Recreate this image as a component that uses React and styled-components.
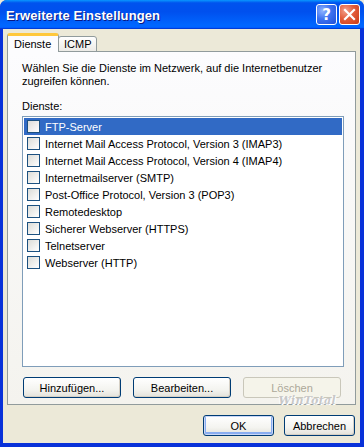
import styled, { createGlobalStyle } from "styled-components";

const GlobalStyle = createGlobalStyle`
  html, body {
    margin: 0;
    padding: 0;
    background: #ece9d8;
  }
  * {
    box-sizing: border-box;
  }
`;

const services = [
  "FTP-Server",
  "Internet Mail Access Protocol, Version 3 (IMAP3)",
  "Internet Mail Access Protocol, Version 4 (IMAP4)",
  "Internetmailserver (SMTP)",
  "Post-Office Protocol, Version 3 (POP3)",
  "Remotedesktop",
  "Sicherer Webserver (HTTPS)",
  "Telnetserver",
  "Webserver (HTTP)",
];

const App = () => {
  return (
    <>
      <GlobalStyle />
      <StyledWindow>
        <StyledTitleBar>
          <StyledTitle>Erweiterte Einstellungen</StyledTitle>
          <StyledCaptionButton>?</StyledCaptionButton>
          <StyledCaptionButton $close>
            <svg width="13" height="13" viewBox="0 0 13 13">
              <path
                d="M2 2 L11 11 M11 2 L2 11"
                stroke="#fff"
                strokeWidth="2.2"
                strokeLinecap="square"
              />
            </svg>
          </StyledCaptionButton>
        </StyledTitleBar>
        <StyledBody>
          <StyledTabs>
            <StyledTab $active>Dienste</StyledTab>
            <StyledTab>ICMP</StyledTab>
          </StyledTabs>
          <StyledPanel>
            <StyledText>
              Wählen Sie die Dienste im Netzwerk, auf die Internetbenutzer
              zugreifen können.
            </StyledText>
            <StyledLabel>Dienste:</StyledLabel>
            <StyledList>
              {services.map((name, i) => (
                <StyledRow key={name} $selected={i === 0}>
                  <StyledCheck />
                  <span>{name}</span>
                </StyledRow>
              ))}
            </StyledList>
            <StyledButtonRow>
              <StyledButton>Hinzufügen...</StyledButton>
              <StyledButton>Bearbeiten...</StyledButton>
              <StyledButton disabled>
                Löschen
                <StyledWatermark>WinTotal</StyledWatermark>
              </StyledButton>
            </StyledButtonRow>
          </StyledPanel>
          <StyledFooter>
            <StyledButton $default $small>
              OK
            </StyledButton>
            <StyledButton $small>Abbrechen</StyledButton>
          </StyledFooter>
        </StyledBody>
      </StyledWindow>
    </>
  );
};

const StyledWindow = styled.div`
  width: 364px;
  height: 447px;
  display: flex;
  flex-direction: column;
  background: #0831d9;
  border-radius: 7px 7px 0 0;
  overflow: hidden;
  font-family: "Liberation Sans", Arial, sans-serif;
  font-size: 11px;
  color: #000;
`;

const StyledTitleBar = styled.div`
  height: 29px;
  flex: none;
  display: flex;
  align-items: center;
  padding: 0 4px 0 6px;
  gap: 2px;
  background: linear-gradient(
    180deg,
    #0997ff 0%,
    #0053ee 10%,
    #0050ee 40%,
    #0066ff 86%,
    #0066ff 92%,
    #005bff 95%,
    #003dd7 97%,
    #003dd7 100%
  );
`;

const StyledTitle = styled.div`
  flex: 1;
  color: #fff;
  font-family: "Liberation Sans", Arial, sans-serif;
  font-weight: bold;
  font-size: 13px;
  letter-spacing: 0.1px;
  text-shadow: 1px 1px 0 #0a1883;
  padding-top: 1px;
`;

const StyledCaptionButton = styled.div`
  width: 21px;
  height: 21px;
  border: 1px solid #fff;
  border-radius: 3px;
  display: flex;
  align-items: center;
  justify-content: center;
  color: #fff;
  font-family: "DejaVu Sans", sans-serif;
  font-weight: bold;
  font-size: 15px;
  background: ${(p) =>
    p.$close
      ? "radial-gradient(circle at 30% 30%, #f2a18c 0%, #e35c3a 45%, #c93a16 100%)"
      : "radial-gradient(circle at 30% 30%, #8fb4ff 0%, #3d72f0 45%, #1f4fd8 100%)"};
`;

const StyledBody = styled.div`
  flex: 1;
  margin: 0 4px 4px 3px;
  background: #ece9d8;
  padding: 5px 4px 6px 4px;
  display: flex;
  flex-direction: column;
`;

const StyledTabs = styled.div`
  display: flex;
  align-items: flex-end;
  height: 18px;
  position: relative;
  z-index: 1;
  margin-bottom: -1px;
`;

const StyledTab = styled.div`
  height: ${(p) => (p.$active ? "19px" : "16px")};
  padding: 0 ${(p) => (p.$active ? "6px" : "5px")};
  display: flex;
  align-items: center;
  background: ${(p) =>
    p.$active ? "#fcfcfe" : "linear-gradient(180deg, #fff, #ecebe6)"};
  border: 1px solid #919b9c;
  border-bottom: ${(p) => (p.$active ? "none" : "1px solid #919b9c")};
  border-top: ${(p) => (p.$active ? "3px solid #ffc83c" : "1px solid #919b9c")};
  border-radius: 3px 3px 0 0;
  margin-left: ${(p) => (p.$active ? "0" : "-1px")};
  width: ${(p) => (p.$active ? "52px" : "39px")};
  font-size: 11px;
`;

const StyledPanel = styled.div`
  height: 354px;
  flex: none;
  border: 1px solid #919b9c;
  background: linear-gradient(180deg, #fcfcfe 0%, #f4f3ee 100%);
  padding: 10px 11px 0 14px;
  display: flex;
  flex-direction: column;
`;

const StyledText = styled.div`
  line-height: 13px;
`;

const StyledLabel = styled.div`
  margin-top: 12px;
  line-height: 13px;
`;

const StyledList = styled.div`
  margin-top: 3px;
  height: 251px;
  background: #fff;
  border: 1px solid #7f9db9;
  padding: 1px;
  display: flex;
  flex-direction: column;
`;

const StyledRow = styled.div`
  height: 17px;
  display: flex;
  align-items: center;
  gap: 5px;
  padding-left: 3px;
  background: ${(p) => (p.$selected ? "#316ac5" : "transparent")};
  color: ${(p) => (p.$selected ? "#fff" : "#000")};
  white-space: nowrap;
`;

const StyledCheck = styled.span`
  width: 13px;
  height: 13px;
  flex: none;
  border: 1px solid #1c5180;
  background: linear-gradient(135deg, #dcdcd7 0%, #fff 100%);
`;

const StyledButtonRow = styled.div`
  margin-top: 10px;
  display: flex;
  gap: 12px;
  padding-left: 1px;
`;

const StyledButton = styled.button`
  position: relative;
  width: ${(p) => (p.$small ? "71px" : "98px")};
  height: 21px;
  padding: 0;
  font-family: "Liberation Sans", Arial, sans-serif;
  font-size: 11px;
  color: #000;
  border: 1px solid #003c74;
  border-radius: 3px;
  background: linear-gradient(180deg, #fff 0%, #f4f4f0 60%, #e3e2da 100%);
  box-shadow: ${(p) =>
    p.$default
      ? "inset 0 0 0 1px #c9d7f7, inset 0 -1px 0 2px #89adf0"
      : "inset -1px -1px 0 #d6d0c5"};
  &:disabled {
    color: #aca899;
    border-color: #c9c7ba;
    background: #f5f4ea;
    box-shadow: none;
  }
`;

const StyledWatermark = styled.span`
  position: absolute;
  right: 4px;
  bottom: -10px;
  font-family: "DejaVu Serif", serif;
  font-style: italic;
  font-weight: bold;
  font-size: 11px;
  color: #c8c8c8;
  text-shadow: 1px 1px 0 #fff, -1px 0 0 #fff;
  letter-spacing: 0.3px;
`;

const StyledFooter = styled.div`
  margin-top: 10px;
  display: flex;
  justify-content: flex-end;
  gap: 10px;
  padding-right: 1px;
`;

export default App;
